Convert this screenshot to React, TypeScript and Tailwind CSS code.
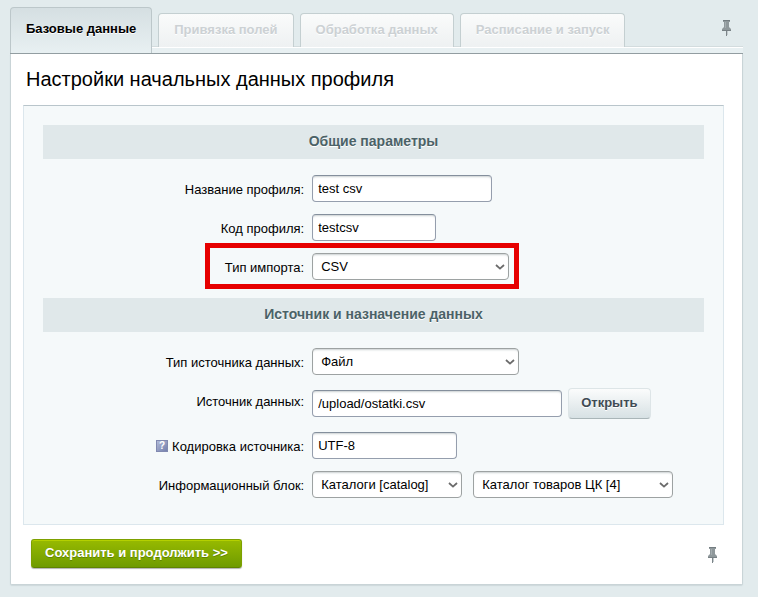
import type { ReactNode } from "react";

const inputClass =
  "h-[27px] rounded-[4px] border border-[#959ead] border-t-[#848f9c] bg-white px-[5px] pb-px text-[13px] text-black shadow-[inset_0_2px_2px_-1px_rgba(180,188,191,0.7)] outline-none";

function Pin() {
  return (
    <button type="button" aria-label="Закрепить" className="block h-[17px] w-[11px]">
      <svg viewBox="0 0 11 17" width="11" height="17" className="block">
        <path d="M2 0h7v2H8v5l2 2v2H1V9l2-2V2H2z" fill="#8f989b" />
        <path d="M2 0h7v1H2z" fill="#737c80" />
        <path d="M4 2h1v6H4z" fill="#a4adb0" />
        <path d="M1 10h9v1H1z" fill="#788185" />
        <path d="M5 11h1v5H5z" fill="#7c8589" />
        <path d="M6 11h1v4H6z" fill="#c3cbce" />
      </svg>
    </button>
  );
}

function Section({ children }: { children: ReactNode }) {
  return (
    <h2 className="flex h-[34px] items-center justify-center bg-[#e0e8ea] pb-[2px] text-[14px] font-bold text-[#4b6267] [text-shadow:0_1px_#fff]">
      {children}
    </h2>
  );
}

function Row({ id, label, hint, children }: { id: string; label: string; hint?: boolean; children: ReactNode }) {
  return (
    <div className="grid grid-cols-[2fr_3fr] items-start gap-2">
      <div className="flex items-center justify-end gap-1 pt-[7px]">
        {hint && (
          <button
            type="button"
            aria-label="Подсказка"
            className="mb-[3px] flex size-3 items-center justify-center border border-[#8089b0] bg-linear-to-br from-[#b3bbd6] to-[#7480ad] text-[10px] leading-none font-bold text-white"
          >
            ?
          </button>
        )}
        <label htmlFor={id}>{label}</label>
      </div>
      <div className="flex items-center">{children}</div>
    </div>
  );
}

function Select({ id, value, width, label, marked }: { id: string; value: string; width: string; label?: string; marked?: boolean }) {
  return (
    <div className={`relative ${width}`}>
      <select
        id={id}
        aria-label={label}
        className="block h-[27px] w-full appearance-none rounded-[4px] border border-[#9da2a2] bg-white pr-5 pl-2 text-[13px] text-black shadow-[inset_0_2px_2px_-1px_rgba(180,188,191,0.7)] outline-none"
      >
        <option>{value}</option>
      </select>
      <svg viewBox="0 0 10 6" width="10" height="6" className="pointer-events-none absolute top-[11px] right-1">
        <path d="M1 1l4 3.6L9 1" fill="none" stroke="#6b6b6b" strokeWidth="1.8" />
      </svg>
      {marked && <div className="pointer-events-none absolute -top-[10px] -right-[10px] -bottom-[9px] -left-[107px] border-5 border-[#e60000]" />}
    </div>
  );
}

const tabs = ["Привязка полей", "Обработка данных", "Расписание и запуск"];

export default function App() {
  return (
    <div className="min-h-screen bg-[#e2ebed] pt-2 pr-[15px] pb-3 pl-[10px] font-['Liberation_Sans',Arial,sans-serif] text-[13px] leading-4 text-black">
      <div>
        <div role="tablist" className="flex h-10 items-end gap-[6px] border-b border-white shadow-[inset_0_-1px_#d3dcde]">
          <button
            type="button"
            role="tab"
            aria-selected="true"
            className="relative -mb-[6px] h-[46px] rounded-t-[4px] border border-b-0 border-[#bcc7ca] bg-linear-to-b from-[#d5dfe2] to-[#e8f0f2] px-[15px] pb-1 font-bold [text-shadow:0_1px_#fff]"
          >
            Базовые данные
          </button>
          {tabs.map((tab) => (
            <button
              key={tab}
              type="button"
              role="tab"
              aria-selected="false"
              className="h-[34px] rounded-t-[4px] border border-b-0 border-[#c4cfd1] bg-linear-to-b from-[#fafbfb] to-[#eef1f2] px-[15px] pb-[2px] font-bold text-[#ccd1d4] [text-shadow:0_1px_#fff]"
            >
              {tab}
            </button>
          ))}
          <div className="mr-[11px] mb-[10px] ml-auto">
            <Pin />
          </div>
        </div>
        <div className="h-[6px] border-b border-[#929da1] bg-[#e8f0f2]" />
      </div>
      <main className="rounded-b-[2px] border border-t-0 border-[#c9d4d7] bg-white shadow-[0_1px_1px_rgba(160,175,180,0.3)]">
        <h1 className="px-[15px] pt-[13px] pb-[14px] text-[20px] leading-6">Настройки начальных данных профиля</h1>
        <form>
          <div className="mr-[18px] ml-3 border border-[#dce7ed] border-t-[#b9c5cb] bg-[#f5f9fa] px-[19px] pt-[19px] pb-[26px]">
            <Section>Общие параметры</Section>
            <div className="flex flex-col gap-3 pt-4 pb-[18px]">
              <Row id="name" label="Название профиля:">
                <input id="name" defaultValue="test csv" className={`${inputClass} w-[180px]`} />
              </Row>
              <Row id="code" label="Код профиля:">
                <input id="code" defaultValue="testcsv" className={`${inputClass} w-[124px]`} />
              </Row>
              <Row id="type" label="Тип импорта:">
                <Select id="type" value="CSV" width="w-[197px]" marked />
              </Row>
            </div>
            <Section>Источник и назначение данных</Section>
            <div className="flex flex-col gap-3 pt-4">
              <Row id="source-type" label="Тип источника данных:">
                <Select id="source-type" value="Файл" width="w-[207px]" />
              </Row>
              <Row id="source" label="Источник данных:">
                <input id="source" defaultValue="/upload/ostatki.csv" className={`${inputClass} w-[250px]`} />
                <button
                  type="button"
                  className="my-px ml-[6px] h-[31px] rounded-[4px] border border-[#dde5e7] border-b-[#a9b5b8] bg-linear-to-b from-[#fbfcfc] to-[#d7e1e4] px-3 pb-[2px] font-bold text-[#3f4b54] [text-shadow:0_1px_#fff]"
                >
                  Открыть
                </button>
              </Row>
              <Row id="encoding" label="Кодировка источника:" hint>
                <input id="encoding" defaultValue="UTF-8" className={`${inputClass} w-[145px]`} />
              </Row>
              <Row id="block" label="Информационный блок:">
                <Select id="block" value="Каталоги [catalog]" width="w-[150px]" />
                <div className="w-[11px]" />
                <Select id="catalog" label="Каталог" value="Каталог товаров ЦК [4]" width="w-[200px]" />
              </Row>
            </div>
          </div>
          <div className="flex items-end justify-between pt-[14px] pr-6 pb-4 pl-5">
            <button
              type="submit"
              className="h-[29px] rounded-[3px] border border-[#7da000] border-b-[#5f8400] bg-linear-to-b from-[#97ba00] to-[#6f9b00] px-[13px] pb-[2px] font-bold text-white shadow-[inset_0_1px_#b4d000,0_1px_1px_rgba(0,0,0,0.3)] [text-shadow:0_1px_#5f8400]"
            >
              Сохранить и продолжить &gt;&gt;
            </button>
            <div className="mb-1">
              <Pin />
            </div>
          </div>
        </form>
      </main>
    </div>
  );
}
